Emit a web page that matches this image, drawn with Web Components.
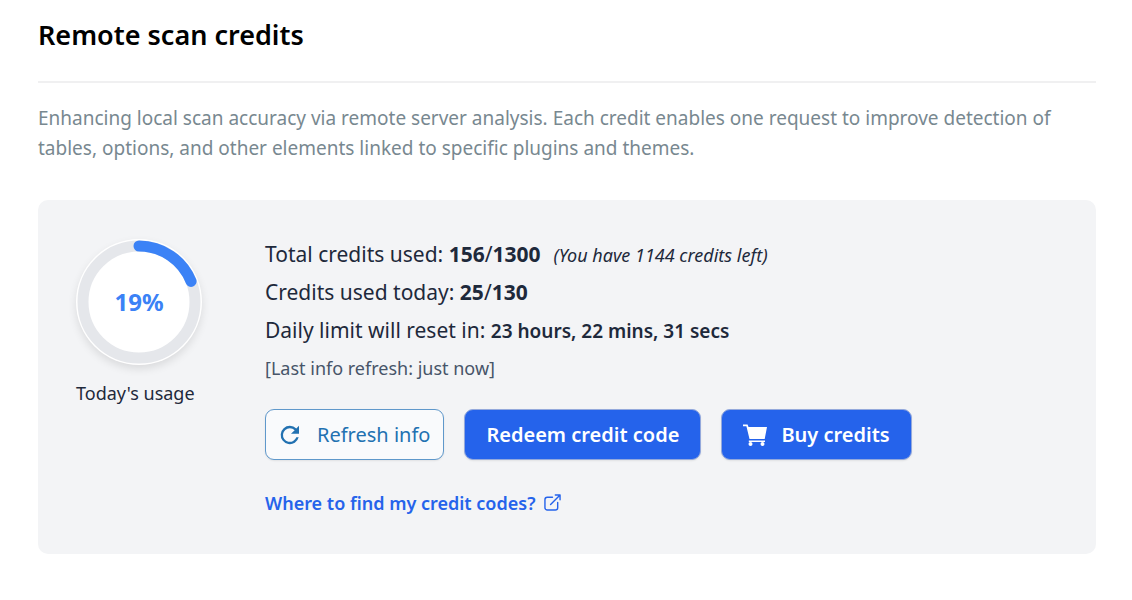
<!DOCTYPE html>
<html lang="en">
  <head>
    <meta charset="UTF-8">
    <meta name="viewport" content="width=device-width, initial-scale=1.0">
    <title>Remote scan credits</title>
    <style>
    body {
      margin: 0;
      background: #fff;
      color: #1e293b;
      font-family: "Segoe UI", "Noto Sans", "Open Sans", sans-serif;
    }
    </style>
  </head>
  <body>
    <credits-section>
      <span slot="title">Remote scan credits</span>
      <span slot="intro">Enhancing local scan accuracy via remote server analysis. Each credit enables one request to improve detection of tables, options, and other elements linked to specific plugins and themes.</span>
      <usage-ring slot="usage" percent="19">Today's usage</usage-ring>
      <credit-line>Total credits used: <span slot="value"><b>156</b>/<b>1300</b></span><i slot="note">(You have 1144 credits left)</i></credit-line>
      <credit-line>Credits used today: <span slot="value"><b>25</b>/<b>130</b></span></credit-line>
      <credit-line time>Daily limit will reset in: <span slot="value">23 hours, 22 mins, 31 secs</span></credit-line>
      <credit-line small>[Last info refresh: just now]</credit-line>
      <action-button slot="actions" icon="refresh" outline>Refresh info</action-button>
      <action-button slot="actions">Redeem credit code</action-button>
      <action-button slot="actions" icon="cart">Buy credits</action-button>
      <help-link slot="help" href="#credit-codes">Where to find my credit codes?</help-link>
    </credits-section>

    <script>
    const ICONS = {
      refresh: `<svg width="24" height="24" viewBox="2.5 1.5 21 21" fill="currentColor" aria-hidden="true">
        <path d="M17.65 6.35A7.96 7.96 0 0 0 12 4a8 8 0 1 0 7.73 10h-2.08A6 6 0 1 1 12 6c1.66 0 3.14.69 4.22 1.78L13 11h7V4z"/>
      </svg>`,
      cart: `<svg width="24" height="24" viewBox="1 0 24 24" fill="currentColor" aria-hidden="true">
        <path d="M1 1.5h4.600l.9 2.500H25l-2.300 12H7.500L4.400 3.300H1z"/>
        <path d="M6.800 17.500h16.200v1.500H6.800z"/>
        <circle cx="8.500" cy="21" r="2"/>
        <circle cx="20.500" cy="21" r="2"/>
      </svg>`
    };

    class CreditsSection extends HTMLElement {
      constructor() {
        super();
        this.attachShadow({ mode: 'open' });
        this.shadowRoot.innerHTML = `
        <style>
        :host {
          display: block;
          padding: 16px 36px 44px 38px;
        }
        h2 {
          margin: 0;
          padding-bottom: 27px;
          border-bottom: 2px solid #f0f0f1;
          color: #000;
          font-size: 27px;
          font-weight: 600;
          line-height: 38px;
        }
        .intro {
          margin: 20px 0 37px;
          color: #788890;
          font-size: 19px;
          line-height: 30px;
        }
        .panel {
          display: flex;
          align-items: flex-start;
          gap: 63px;
          padding: 35px 38px 36px;
          border-radius: 10px;
          background: #f3f4f6;
        }
        .details {
          flex: 1;
          min-width: 0;
        }
        .actions {
          display: flex;
          flex-wrap: wrap;
          gap: 20px;
          margin: 22px 0 28px;
        }
        </style>
        <h2><slot name="title"></slot></h2>
        <p class="intro"><slot name="intro"></slot></p>
        <div class="panel">
          <slot name="usage"></slot>
          <div class="details">
            <slot></slot>
            <div class="actions"><slot name="actions"></slot></div>
            <slot name="help"></slot>
          </div>
        </div>
        `;
      }
    }

    class UsageRing extends HTMLElement {
      constructor() {
        super();
        this.attachShadow({ mode: 'open' });
        this.shadowRoot.innerHTML = `
        <style>
        :host {
          display: block;
          flex: none;
          font-size: 18px;
          line-height: 28px;
        }
        .ring {
          display: grid;
          place-items: center;
          width: 126px;
          height: 126px;
          margin: 4px 0 14px;
          border-radius: 50%;
          background: #fff;
          box-shadow: 0 4px 8px rgba(0, 0, 0, 0.1);
        }
        svg, .value {
          grid-area: 1 / 1;
        }
        circle {
          fill: none;
          stroke: #e5e7eb;
          stroke-width: 11;
        }
        .bar {
          stroke: #3b82f6;
          stroke-linecap: round;
        }
        .value {
          color: #3b82f6;
          font-size: 24px;
          font-weight: 700;
        }
        </style>
        <div class="ring">
          <svg width="126" height="126" viewBox="0 0 126 126" aria-hidden="true">
            <circle cx="63" cy="63" r="56"/>
            <circle class="bar" cx="63" cy="63" r="56" pathLength="100" transform="rotate(-90 63 63)"/>
          </svg>
          <span class="value"></span>
        </div>
        <slot></slot>
        `;
      }
      connectedCallback() {
        const percent = this.getAttribute('percent');
        this.shadowRoot.querySelector('.value').textContent = percent + '%';
        this.shadowRoot.querySelector('.bar').setAttribute('stroke-dasharray', percent + ' 100');
      }
    }

    class CreditLine extends HTMLElement {
      constructor() {
        super();
        this.attachShadow({ mode: 'open' });
        this.shadowRoot.innerHTML = `
        <style>
        :host {
          display: block;
          font-size: 21px;
          line-height: 38px;
        }
        :host([small]) {
          color: #475569;
          font-size: 18px;
        }
        ::slotted(*) {
          line-height: 1;
        }
        :host([time]) ::slotted([slot="value"]) {
          font-size: 19px;
          font-weight: 600;
        }
        ::slotted([slot="note"]) {
          margin-left: 13px;
          font-size: 18px;
        }
        </style>
        <slot></slot><slot name="value"></slot><slot name="note"></slot>
        `;
      }
    }

    class ActionButton extends HTMLElement {
      constructor() {
        super();
        this.attachShadow({ mode: 'open' });
        this.shadowRoot.innerHTML = `
        <style>
        :host {
          display: block;
        }
        button {
          display: flex;
          align-items: center;
          gap: 14px;
          height: 51px;
          padding: 0 21px;
          border: 1px solid #94a9dc;
          border-radius: 9px;
          background: #2563eb;
          box-shadow: 0 1px 2px rgba(0, 0, 0, 0.08);
          color: #fff;
          font: inherit;
          font-size: 20px;
          font-weight: 600;
          cursor: pointer;
        }
        :host([outline]) button {
          padding: 0 13px;
          border-color: #5f98cb;
          background: #f9fafc;
          color: #2271b1;
          font-weight: 400;
        }
        svg {
          display: block;
        }
        </style>
        <button type="button"><slot></slot></button>
        `;
      }
      connectedCallback() {
        const icon = ICONS[this.getAttribute('icon')];
        if (icon) {
          this.shadowRoot.querySelector('button').insertAdjacentHTML('afterbegin', icon);
        }
      }
    }

    class HelpLink extends HTMLElement {
      constructor() {
        super();
        this.attachShadow({ mode: 'open' });
        this.shadowRoot.innerHTML = `
        <style>
        :host {
          display: block;
        }
        a {
          display: inline-flex;
          align-items: center;
          gap: 9px;
          color: #2563eb;
          font-size: 18px;
          font-weight: 600;
          line-height: 30px;
          text-decoration: none;
        }
        svg {
          margin-bottom: 2px;
        }
        </style>
        <a><slot></slot>
          <svg width="17" height="17" viewBox="0 0 18 18" fill="none" stroke="currentColor" stroke-width="1.5" stroke-linecap="round" stroke-linejoin="round" aria-hidden="true">
            <path d="M9 3.500H3.500A2.500 2.500 0 0 0 1 6v8.500A2.500 2.500 0 0 0 3.500 17H12a2.500 2.500 0 0 0 2.500-2.500V9M7 11L17 1M12 1h5v5"/>
          </svg>
        </a>
        `;
      }
      connectedCallback() {
        this.shadowRoot.querySelector('a').href = this.getAttribute('href');
      }
    }

    customElements.define('credits-section', CreditsSection);
    customElements.define('usage-ring', UsageRing);
    customElements.define('credit-line', CreditLine);
    customElements.define('action-button', ActionButton);
    customElements.define('help-link', HelpLink);
    </script>
  </body>
</html>
